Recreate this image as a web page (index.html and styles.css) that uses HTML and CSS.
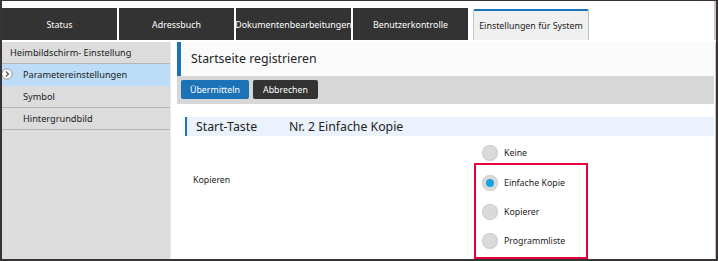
FILE: index.html
```html
<!DOCTYPE html>
<html lang="de">
<head>
    <meta charset="UTF-8">
    <title>Einstellungen für System</title>
    <link rel="stylesheet" href="styles.css">
</head>
<body>
    <div class="frame">
        <div class="tabs">
            <a href="#" class="tab">Status</a>
            <a href="#" class="tab">Adressbuch</a>
            <a href="#" class="tab">Dokumentenbearbeitungen</a>
            <a href="#" class="tab">Benutzerkontrolle</a>
            <a href="#" class="tab active">Einstellungen für System</a>
        </div>

        <div class="content">
            <!-- Left menu -->
            <div class="sidebar">
                <div class="side-head">Heimbildschirm- Einstellung</div>
                <div class="side-item selected">
                    <svg class="side-arrow" width="12" height="12" viewBox="0 0 12 12">
                        <circle cx="6" cy="6" r="5.2" fill="#fff" stroke="#9a9a9a" stroke-width="1"/>
                        <path d="M4.8 3.4 L7.4 6 L4.8 8.6" fill="none" stroke="#555" stroke-width="1.3"/>
                    </svg>
                    Parametereinstellungen
                </div>
                <div class="side-item">Symbol</div>
                <div class="side-item">Hintergrundbild</div>
            </div>

            <!-- Main panel -->
            <div class="main">
                <div class="page-title">Startseite registrieren</div>
                <div class="button-bar">
                    <button class="btn btn-primary">Übermitteln</button>
                    <button class="btn btn-dark">Abbrechen</button>
                </div>

                <div class="section-row">
                    <span class="section-label">Start-Taste</span>
                    <span class="section-value">Nr. 2 Einfache Kopie</span>
                </div>

                <div class="form-row">
                    <div class="form-label">Kopieren</div>
                    <div class="options">
                        <label class="option first">
                            <span class="radio"></span>Keine
                        </label>
                        <div class="highlight">
                            <label class="option">
                                <span class="radio checked"></span>Einfache Kopie
                            </label>
                            <label class="option">
                                <span class="radio"></span>Kopierer
                            </label>
                            <label class="option">
                                <span class="radio"></span>Programmliste
                            </label>
                        </div>
                    </div>
                </div>
            </div>
        </div>
    </div>
</body>
</html>
```

FILE: styles.css
```css
/* Settings page of the device web UI */
body {
    margin: 0;
    padding: 0;
    font-family: 'Noto Sans', 'Open Sans', sans-serif;
    background-color: #fff;
    color: #222;
}

.frame {
    width: 718px;
    height: 261px;
    box-sizing: border-box;
    border: 2px solid #3a3333;
    border-top-width: 1px;
    background-color: #fff;
    overflow: hidden;
}

/* Tab bar */
.tabs {
    display: flex;
    align-items: flex-end;
    gap: 2px;
    height: 39px;
    border-right: 2px solid #c8c8c8;
}

.tab {
    flex: none;
    width: 115px;
    height: 32px;
    display: flex;
    align-items: center;
    justify-content: center;
    background-color: #333;
    color: #fff;
    font-size: 8.9px;
    text-decoration: none;
    white-space: nowrap;
}

.tab.active {
    margin-left: 3px;
    width: 116px;
    height: 31px;
    box-sizing: border-box;
    background-color: #f0f0f0;
    color: #222;
    border: 1px solid #c4c4c4;
    border-top: 2px solid #1a73b8;
    border-bottom: none;
    border-radius: 2px 2px 0 0;
}

/* Content area */
.content {
    display: flex;
    height: 219px;
    padding-top: 2px;
    box-sizing: border-box;
}

.sidebar {
    width: 168px;
    background-color: #dcdcdc;
    border-right: 1px solid #ececec;
    font-size: 9.2px;
    color: #222;
}

.side-head {
    height: 21px;
    line-height: 22px;
    padding-left: 8px;
    border-bottom: 1px solid #b5b5b5;
}

.side-item {
    position: relative;
    height: 21px;
    line-height: 21px;
    padding-left: 21px;
    border-bottom: 1px solid #b5b5b5;
}

.side-item.selected {
    background-color: #bcdcf7;
    border-bottom-color: #bcdcf7;
}

.side-arrow {
    position: absolute;
    left: -1px;
    top: 4px;
}

.main {
    flex: 1;
    padding-left: 6px;
    padding-right: 1px;
    border-right: 1px solid #c8c8c8;
}

.page-title {
    height: 34px;
    line-height: 34px;
    padding-left: 10px;
    background-color: #fafafa;
    border-left: 4px solid #1a73b8;
    font-size: 12.3px;
    color: #222;
}

.button-bar {
    display: flex;
    gap: 4px;
    height: 28px;
    box-sizing: border-box;
    padding: 4px;
    background-color: #d7d7d7;
}

.btn {
    height: 19px;
    padding: 0;
    border: none;
    border-radius: 2px;
    font-family: inherit;
    font-size: 8.8px;
    color: #fff;
    cursor: pointer;
}

.btn-primary {
    background-color: #1b72b7;
    width: 68px;
}

.btn-dark {
    background-color: #333;
    width: 65px;
}

.section-row {
    display: flex;
    align-items: center;
    margin: 13px 0 0 8px;
    height: 19px;
    padding-left: 9px;
    background-color: #ebf2fd;
    border-left: 2px solid #1a73b8;
    font-size: 12.3px;
    color: #222;
}

.section-label {
    width: 93px;
}

/* Radio group */
.form-row {
    display: flex;
    padding-top: 6px;
}

.form-label {
    width: 281px;
    padding: 30px 0 0 16px;
    font-size: 8.8px;
    line-height: 16px;
}

.options {
    width: 114px;
    font-size: 8.8px;
}

.option {
    display: flex;
    align-items: center;
    gap: 6px;
    height: 29px;
    padding-left: 6px;
}

.option.first {
    height: 21px;
    padding-left: 8px;
}

.highlight {
    border: 2px solid #e3003a;
    padding: 3px 0 2px;
}

.radio {
    position: relative;
    width: 16px;
    height: 16px;
    border-radius: 50%;
    background-color: #dadada;
    box-shadow: inset 0 0 0 1px #d0d0d0;
}

.radio.checked::after {
    content: "";
    position: absolute;
    left: 4px;
    top: 4px;
    width: 8px;
    height: 8px;
    border-radius: 50%;
    background-color: #1aa3db;
}
```
